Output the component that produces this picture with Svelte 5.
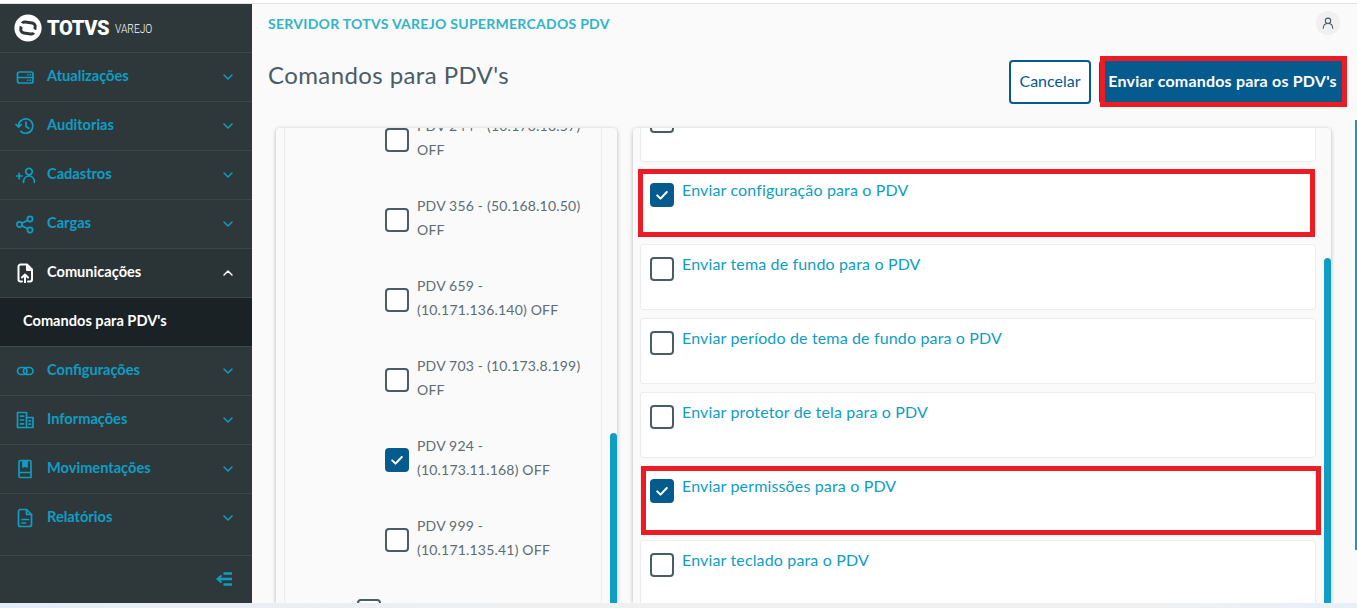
<script>
  const nav = [
    { label: 'Atualizações', icon: 'server' },
    { label: 'Auditorias', icon: 'history' },
    { label: 'Cadastros', icon: 'adduser' },
    { label: 'Cargas', icon: 'share' },
    { label: 'Comunicações', icon: 'upload', open: true },
    { label: 'Configurações', icon: 'link' },
    { label: 'Informações', icon: 'building' },
    { label: 'Movimentações', icon: 'book' },
    { label: 'Relatórios', icon: 'doc' }
  ];
  const pdvs = [
    { l: 'PDV 244 - (10.173.13.57) OFF' },
    { l: 'PDV 356 - (50.168.10.50) OFF' },
    { l: 'PDV 659 - (10.171.136.140) OFF' },
    { l: 'PDV 703 - (10.173.8.199) OFF' },
    { l: 'PDV 924 - (10.173.11.168) OFF', c: true },
    { l: 'PDV 999 - (10.171.135.41) OFF' }
  ];
  const cmds = [
    { l: '' },
    { l: 'Enviar configuração para o PDV', c: true },
    { l: 'Enviar tema de fundo para o PDV' },
    { l: 'Enviar período de tema de fundo para o PDV' },
    { l: 'Enviar protetor de tela para o PDV' },
    { l: 'Enviar permissões para o PDV', c: true },
    { l: 'Enviar teclado para o PDV' }
  ];
</script>

{#snippet box(checked)}
  <span class="box" class:checked>
    {#if checked}
      <svg viewBox="0 0 24 24" width="24" height="24"><path d="M7.2 12.4l3.3 3.2 6.3-6.6" fill="none" stroke="#fff" stroke-width="2" stroke-linecap="round" stroke-linejoin="round"/></svg>
    {/if}
  </span>
{/snippet}

{#snippet icon(name)}
  <svg class="nav-icon" viewBox="0 0 20 20" width="20" height="20" fill="none" stroke="currentColor" stroke-width="1.7" stroke-linecap="round" stroke-linejoin="round">
    {#if name === 'server'}
      <rect x="2.5" y="5" width="15.500" height="11" rx="2"/><path d="M2.500 10.500h15.500M12.500 7.800h.5M15 7.800h.5M12.500 13.200h.5M15 13.200h.5" stroke-width="1.400"/>
    {:else if name === 'history'}
      <path d="M3.500 10a7.200 7.200 0 1 1 2.300 5.300"/><path d="M1 8.500L3.500 11l2.700-2.400"/><path d="M11 6v4.500l2.800 1.800"/>
    {:else if name === 'adduser'}
      <path d="M1.500 11h5.500M4.200 8.300v5.400"/><circle cx="14" cy="6.600" r="3.300"/><path d="M8.500 17.500c0-3.800 2.400-6.500 5.500-6.500s5.500 2.700 5.500 6.500"/>
    {:else if name === 'share'}
      <circle cx="4.500" cy="10.500" r="2.600"/><circle cx="15" cy="5" r="2.600"/><circle cx="15" cy="16" r="2.600"/><path d="M6.900 9.300l5.800-3.100M6.900 11.700l5.800 3.100"/>
    {:else if name === 'upload'}
      <path d="M7 18.500H5.500a2 2 0 0 1-2-2V3.500a2 2 0 0 1 2-2h6.500l5 5v10a2 2 0 0 1-2 2H13" stroke-width="2"/><path d="M11.500 2v5.500H17z" fill="currentColor" stroke-width="1"/><path d="M10 20v-8M7 14.500l3-3 3 3" stroke-width="2"/>
    {:else if name === 'link'}
      <rect x="2.500" y="6.500" width="9.500" height="7" rx="3.500"/><rect x="8.500" y="6.500" width="9.500" height="7" rx="3.500"/>
    {:else if name === 'building'}
      <rect x="2.500" y="2.500" width="9" height="15"/><path d="M11.500 7.500h6.500v10h-6.500M5.500 6.200h3M5.500 10h3M5.500 13.800h3M14.200 10.800h1.200M14.200 14.200h1.200"/>
    {:else if name === 'book'}
      <path d="M4 15V3a1.500 1.500 0 0 1 1.500-1.500h9A1.500 1.500 0 0 1 16 3v15.500H5.500A1.500 1.500 0 0 1 4 17v-2a1.500 1.500 0 0 1 1.500-1.500H16"/><path d="M8 1.500V8l2-1.500L12 8V1.500" fill="currentColor"/>
    {:else if name === 'doc'}
      <path d="M11.500 1.500h-6a2 2 0 0 0-2 2v13a2 2 0 0 0 2 2h9a2 2 0 0 0 2-2v-10z"/><path d="M11.500 1.500v5h5M7 11.500h6.500M7 15h3.500"/>
    {/if}
  </svg>
{/snippet}

<div class="topline"></div>
<div class="page">
  <aside class="sidebar">
    <div class="logo">
      <svg viewBox="0 0 28 28" width="28" height="28">
        <circle cx="14" cy="14" r="13.600" fill="#fff"/>
        <rect x="7" y="8.500" width="14" height="11" rx="3.500" fill="none" stroke="#2e383b" stroke-width="3" transform="rotate(8 14 14)"/>
        <path d="M4 9l20 10" stroke="#fff" stroke-width="3.500"/>
      </svg>
      <span class="brand">TOTVS</span>
      <span class="varejo">VAREJO</span>
    </div>
    <nav>
      {#each nav as item}
        <div class="nav-item" class:active={item.open}>
          <span class="icon-slot">{@render icon(item.icon)}</span>
          <span class="nav-label">{item.label}</span>
          <svg class="chev" viewBox="0 0 12 8" width="12" height="8"><path d={item.open ? 'M2 6l4-4 4 4' : 'M2 2l4 4 4-4'} fill="none" stroke="currentColor" stroke-width="1.500" stroke-linecap="round" stroke-linejoin="round"/></svg>
        </div>
        {#if item.open}
          <div class="sub-item">Comandos para PDV's</div>
        {/if}
      {/each}
    </nav>
    <div class="collapse">
      <svg viewBox="0 0 18 14" width="18" height="14" fill="none" stroke="#0f9dc4" stroke-width="2.400"><path d="M17 1.500H8.500M17 7H4M17 12.500H8.500"/><path d="M6.500 3.500L2.500 7l4 3.500" stroke-width="2"/></svg>
    </div>
  </aside>

  <main class="main">
    <header class="topbar">
      <span class="server">SERVIDOR TOTVS VAREJO SUPERMERCADOS PDV</span>
      <span class="avatar">
        <svg viewBox="0 0 14 14" width="14" height="14" fill="none" stroke="#4a5c66" stroke-width="1.100" stroke-linecap="round"><circle cx="7" cy="4.800" r="2.700"/><path d="M2.300 12.200c0-2.800 2-4.700 4.700-4.700s4.700 1.900 4.700 4.700"/></svg>
      </span>
    </header>

    <div class="title-row">
      <h1>Comandos para PDV's</h1>
      <div class="actions">
        <button class="btn ghost">Cancelar</button>
        <button class="btn primary">Enviar comandos para os PDV's</button>
      </div>
    </div>

    <div class="panels">
      <section class="panel left">
        <div class="tree">
          <div class="tree-inner">
            {#each pdvs as p}
              <div class="pdv">
                {@render box(p.c)}
                <span class="pdv-label">{p.l}</span>
              </div>
            {/each}
            <div class="parent">{@render box(false)}</div>
          </div>
        </div>
        <span class="thumb left-thumb"></span>
      </section>

      <section class="panel right">
        <div class="cards">
          {#each cmds as c}
            <div class="card">
              {@render box(c.c)}
              <span class="card-label">{c.l}</span>
            </div>
          {/each}
        </div>
        <span class="thumb right-thumb"></span>
      </section>
    </div>

    <span class="page-thumb"></span>
  </main>
</div>
<div class="bottomline"></div>

<span class="mark mark-btn"></span>
<span class="mark mark-a"></span>
<span class="mark mark-b"></span>

<style>
  :global(body) {
    margin: 0;
    background: #fafafa;
    overflow: hidden;
    font-family: "Lato", "Open Sans", sans-serif;
  }
  .topline { height: 4px; background: #fff; box-shadow: inset 0 -1px 0 #e3e3e3; }
  .page { display: flex; height: 599px; overflow: hidden; }
  .bottomline { height: 5px; background: linear-gradient(90deg, #e3edf8, #f0f0f0 40%, #f0f0f0 85%, #e6eff8); }

  .sidebar {
    width: 252px;
    flex: none;
    background: #2e383b;
    display: flex;
    flex-direction: column;
  }
  .logo {
    height: 48px;
    display: flex;
    align-items: center;
    padding-left: 14px;
    border-bottom: 1px solid #3c4749;
    color: #fff;
  }
  .brand { font-family: "Roboto", sans-serif; font-weight: 900; font-size: 20px; margin-left: 5px; letter-spacing: -.3px; }
  .varejo { font-family: "Roboto", sans-serif; font-weight: 300; font-size: 13.500px; margin-left: 6px; transform: scaleX(.76); transform-origin: left; }
  .nav-item {
    height: 48px;
    display: flex;
    align-items: center;
    border-bottom: 1px solid #3c4749;
    color: #0f9dc4;
    font-weight: 700;
    font-size: 14.600px;
  }
  .nav-item:last-child { border-bottom-color: transparent; }
  .nav-item.active { color: #fff; background: #2a3336; }
  .icon-slot { width: 47px; padding-left: 15px; box-sizing: border-box; display: flex; flex: none; }
  .nav-label { flex: 1; padding-bottom: 4px; }
  .chev { margin-right: 18px; }
  .sub-item {
    height: 49px;
    box-sizing: border-box;
    display: flex;
    align-items: center;
    padding: 0 0 4px 23px;
    background: #1b2225;
    border-bottom: 1px solid #3c4749;
    color: #fff;
    font-weight: 700;
    font-size: 14.600px;
  }
  nav { flex: none; }
  .collapse {
    margin-top: 12px;
    border-top: 1px solid #3c4749;
    display: flex;
    justify-content: flex-end;
    padding: 16px 19px 0 0;
  }

  .main { flex: 1; min-width: 0; display: flex; flex-direction: column; position: relative; background: #fafafa; }
  .topbar {
    height: 38px;
    display: flex;
    align-items: center;
    justify-content: space-between;
    padding: 0 17px 0 16px;
    box-sizing: border-box;
  }
  .server { color: #2fb4c8; font-weight: 700; font-size: 14px; letter-spacing: .28px; }
  .avatar {
    width: 24px; height: 24px; border-radius: 50%;
    background: #f0f0f0;
    display: flex; align-items: center; justify-content: center;
  }
  .title-row {
    height: 86px;
    display: flex;
    justify-content: space-between;
    padding: 0 11px 0 16px;
    box-sizing: border-box;
  }
  h1 {
    margin: 17px 0 0;
    font-weight: 400;
    font-size: 24px;
    line-height: 32px;
    color: #4a5c66;
    letter-spacing: .4px;
  }
  .actions { display: flex; gap: 8px; margin-top: 18px; }
  .btn {
    height: 44px;
    border-radius: 4px;
    font-family: inherit;
    font-size: 16px;
    padding: 0 0 3px;
    box-sizing: border-box;
  }
  .ghost { width: 82px; background: #fff; border: 2px solid #055a8e; color: #055a8e; }
  .primary { width: 247px; background: #055a8e; border: 0; color: #fff; font-weight: 700; white-space: nowrap; letter-spacing: .2px; }

  .panels { flex: 1; min-height: 0; display: flex; gap: 16px; padding-left: 24px; }
  .panel {
    position: relative;
    background: #fafafa;
    border-radius: 4px 4px 0 0;
    box-shadow: 0 1px 4px rgba(0,0,0,.28);
    overflow: hidden;
  }
  .left { width: 341px; flex: none; }
  .right { width: 698px; flex: none; }
  .tree {
    margin: 0 15px 0 8px;
    height: 100%;
    border: 1px solid #ececec;
    border-width: 0 1px;
    overflow: hidden;
  }
  .tree-inner { margin-top: -28px; padding-left: 100px; }
  .pdv {
    height: 80px;
    display: flex;
    align-items: center;
    gap: 8px;
    color: #5d6c74;
    font-size: 14px;
    line-height: 24px;
    letter-spacing: .2px;
  }
  .pdv-label { width: 167px; padding-bottom: 4px; }
  .parent { margin: 19px 0 0 -28px; }

  .box {
    width: 24px; height: 24px;
    box-sizing: border-box;
    flex: none;
    border: 2px solid #4a5c66;
    border-radius: 4px;
    background: #fff;
    display: block;
  }
  .box.checked { background: #055a8e; border: 0; }
  .box svg { display: block; }

  .cards {
    margin: -32px 15px 0 7px;
    display: flex;
    flex-direction: column;
    gap: 8px;
  }
  .card {
    height: 66px;
    flex: none;
    box-sizing: border-box;
    background: #fff;
    border: 1px solid #ececec;
    border-radius: 3px;
    padding: 12px 9px;
    display: flex;
    gap: 8px;
    color: #0f9dc4;
    font-size: 16px;
    line-height: 20px;
    letter-spacing: .15px;
  }
  .card-label { margin-top: -3px; }

  .thumb {
    position: absolute;
    width: 7px;
    right: 0;
    bottom: 0;
    background: #0f9dc4;
    border-radius: 4px 4px 0 0;
  }
  .left-thumb { top: 305px; }
  .right-thumb { top: 130px; }
  .page-thumb {
    position: absolute;
    right: 0; top: 116px;
    width: 2px; height: 430px;
    background: #0f9dc4;
  }

  .mark { position: absolute; border: 5px solid #ed1c24; box-sizing: border-box; pointer-events: none; }
  .mark-btn { left: 1100px; top: 56px; width: 247px; height: 51px; }
  .mark-a { left: 638px; top: 169px; width: 677px; height: 68px; }
  .mark-b { left: 641px; top: 466px; width: 680px; height: 69px; }
</style>
